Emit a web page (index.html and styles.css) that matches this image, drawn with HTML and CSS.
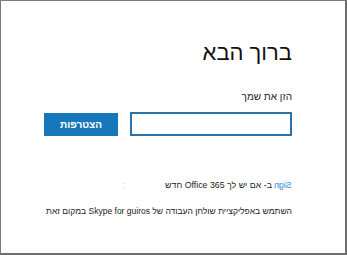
FILE: index.html
```html
<!DOCTYPE html>
<html lang="he" dir="rtl">
<head>
  <meta charset="UTF-8" />
  <title>ברוך הבא</title>
  <link rel="stylesheet" href="styles.css">
</head>
<body>
  <div class="window">
    <h1>ברוך הבא</h1>

    <div class="label">הזן את שמך</div>
    <form class="join-form">
      <input type="text" class="name-input">
      <button type="button" class="join-btn">הצטרפות</button>
    </form>

    <div class="signin-line">
      <a href="#" class="signin-link"><span class="mirror">Sign</span></a> ב- אם יש לך Office 365 חדש
      <span class="faint">:</span>
    </div>

    <div class="desktop-line">השתמש באפליקציית שולחן העבודה של Skype for guiros במקום זאת</div>
  </div>
</body>
</html>
```

FILE: styles.css
```css
body {
  margin: 0;
  font-family: 'Liberation Sans', Arial, sans-serif;
  background: #fff;
  color: #222;
}
.window {
  box-sizing: border-box;
  width: 347px;
  height: 255px;
  border: 1px solid #7a7a7a;
  border-right: 2px solid #6e6e6e;
  border-bottom: 2px solid #6e6e6e;
  padding: 38px 53px 0 0;
}
h1 {
  font-size: 22px;
  font-weight: normal;
  margin: 0 0 24px;
  line-height: 28px;
  color: #111;
}
.label {
  font-size: 10px;
  line-height: 12px;
  margin-bottom: 9px;
}
.join-form {
  display: flex;
  align-items: center;
  gap: 12px;
  margin: 0;
}
.name-input {
  box-sizing: border-box;
  width: 162px;
  height: 24px;
  border: 2px solid #2c72a8;
  margin: 0;
  padding: 0 4px;
}
.join-btn {
  width: 74px;
  height: 23px;
  background: #1777bb;
  color: #fff;
  border: none;
  font-family: inherit;
  font-weight: bold;
  font-size: 10px;
  padding: 0;
  cursor: pointer;
}
.signin-line {
  margin-top: 43px;
  font-size: 8.8px;
  line-height: 12px;
}
.signin-link {
  color: #2d8acc;
  text-decoration: none;
}
.mirror {
  display: inline-block;
  transform: scaleX(-1);
}
.faint {
  color: #ccc;
  margin-right: 38px;
}
.desktop-line {
  margin-top: 15px;
  font-size: 8.5px;
  line-height: 11px;
}
```
